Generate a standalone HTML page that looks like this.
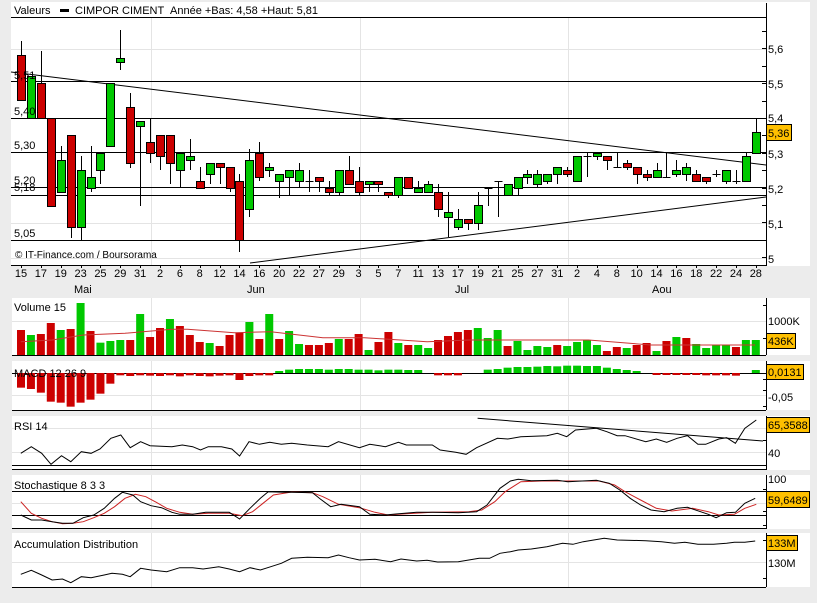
<!DOCTYPE html>
<html><head><meta charset="utf-8">
<style>
html,body{margin:0;padding:0;background:#ececec;width:817px;height:603px;overflow:hidden}
svg{display:block}
text{font-family:"Liberation Sans",sans-serif;font-size:11px;fill:#000}
</style></head><body>
<svg id="s" width="817" height="603" xmlns="http://www.w3.org/2000/svg">
<rect x="0" y="0" width="817" height="603" fill="#ececec"/>
<rect x="11" y="2" width="799" height="264" fill="#fff"/>
<rect x="12" y="298" width="798" height="57" fill="#fff"/>
<rect x="12" y="361" width="798" height="49" fill="#fff"/>
<rect x="12" y="416" width="798" height="54" fill="#fff"/>
<rect x="12" y="475" width="798" height="54" fill="#fff"/>
<rect x="12" y="533" width="798" height="54" fill="#fff"/>
<g id="grid" stroke="#e4e4e4" stroke-width="1"></g>
<g id="lines" stroke="#000" stroke-width="1" fill="none"></g>
<g id="cand"></g>
<g id="lower"></g>
<g>
<text x="14" y="14">Valeurs</text>
<rect x="60" y="9" width="9" height="3" fill="#000"/>
<text x="75" y="14">CIMPOR CIMENT</text>
<text x="170" y="14">Année +Bas: 4,58 +Haut: 5,81</text>
<text x="14" y="79">5,51</text>
<text x="14" y="115">5,40</text>
<text x="14" y="149">5,30</text>
<text x="14" y="184">5,20</text>
<text x="14" y="191">5,18</text>
<text x="14" y="237">5,05</text>
<text x="15" y="258" style="font-size:10px">© IT-Finance.com / Boursorama</text>
<text x="768" y="53">5,6</text>
<text x="768" y="88">5,5</text>
<text x="768" y="122">5,4</text>
<text x="768" y="158">5,3</text>
<text x="768" y="193">5,2</text>
<text x="768" y="228">5,1</text>
<text x="768" y="263">5</text>
<rect x="766.5" y="124.5" width="25" height="16" fill="#ffc000" stroke="#000"/>
<text x="768" y="137">5,36</text>
<text x="74" y="293">Mai</text>
<text x="247" y="293">Jun</text>
<text x="455" y="293">Jul</text>
<text x="652" y="293">Aou</text>
<text x="14" y="311">Volume 15</text>
<text x="768" y="325">1000K</text>
<rect x="766.5" y="333.5" width="29" height="15" fill="#ffc000" stroke="#000"/>
<text x="768" y="345">436K</text>
<text x="14" y="377">MACD 12 26 9</text>
<rect x="766.5" y="364.5" width="37" height="15" fill="#ffc000" stroke="#000"/>
<text x="768" y="376">0,0131</text>
<text x="768" y="401">-0,05</text>
<text x="14" y="430">RSI 14</text>
<rect x="766.5" y="417.5" width="43" height="15" fill="#ffc000" stroke="#000"/>
<text x="768" y="429">65,3588</text>
<text x="768" y="457">40</text>
<text x="14" y="489">Stochastique 8 3 3</text>
<text x="768" y="483">100</text>
<rect x="766.5" y="491.5" width="43" height="16" fill="#ffc000" stroke="#000"/>
<text x="768" y="504">59,6489</text>
<text x="14" y="548">Accumulation Distribution</text>
<rect x="766.5" y="535.5" width="31" height="15" fill="#ffc000" stroke="#000"/>
<text x="768" y="547">133M</text>
<text x="768" y="567">130M</text>
</g>
<g id="xl"></g>
</svg>
<script>
var NS="http://www.w3.org/2000/svg";
function el(p,t,a){var e=document.createElementNS(NS,t);for(var k in a)e.setAttribute(k,a[k]);document.getElementById(p).appendChild(e);return e;}
function ln(p,x1,y1,x2,y2,c,w){el(p,'line',{x1:x1,y1:y1,x2:x2,y2:y2,stroke:c||'#000','stroke-width':w||1});}
var R='#cc0000',G='#00c800';
// grid
[151.5,360.5,568.5].forEach(function(x){ln('grid',x,17,x,265,'#e4e4e4');[[298,355],[361,410],[416,470],[475,529],[533,587]].forEach(function(r){ln('grid',x,r[0],x,r[1],'#e4e4e4');});});
[49.5,223.5,258.5].forEach(function(y){ln('grid',11,y,766,y,'#e4e4e4');});
ln('grid',12,321.5,766,321.5,'#e4e4e4');ln('grid',12,395.5,766,395.5,'#e4e4e4');
ln('grid',12,428.5,766,428.5,'#e4e4e4');ln('grid',12,452.5,766,452.5,'#e4e4e4');
ln('grid',12,503.5,766,503.5,'#e4e4e4');ln('grid',12,562.5,766,562.5,'#e4e4e4');
// main lines
ln('lines',11,17.5,766,17.5);ln('lines',766.5,3,766.5,266);ln('lines',11,265.5,766,265.5);
[81.5,118.5,152.5,187.5,195.5,240.5].forEach(function(y){ln('lines',11,y,766,y);});
ln('lines',11,72,766,165);ln('lines',250,263,766,197);
for(var y=31;y<265;y+=17.4){ln('lines',762,Math.round(y)+.5,766,Math.round(y)+.5);}
// lower frames
[355.5,410.5,469.5,528.5,587.5].forEach(function(y){ln('lines',12,y,766,y);});
[[298,355],[361,410],[416,470],[475,529],[533,587]].forEach(function(r){ln('lines',766.5,r[0],766.5,r[1]);});
[305,338,379,390,406,440,465,489,511,525,540,578].forEach(function(y){ln('lines',763,y+.5,766,y+.5);});
ln('lines',12,373.5,766,373.5);ln('lines',12,465.5,766,465.5);ln('lines',12,491.5,766,491.5);ln('lines',12,515.5,766,515.5);
// x labels
var labs="15 17 19 23 25 29 31 2 6 8 12 14 16 20 22 27 29 3 5 7 11 13 17 19 21 25 27 31 2 4 8 10 14 16 18 22 24 28".split(' ');
function cx(i){return 21+i*9.93;}
labs.forEach(function(l,k){var x=cx(2*k);var t=el('xl','text',{x:x,y:277,'text-anchor':'middle'});t.textContent=l;ln('lines',Math.round(x)+.5,265,Math.round(x)+.5,268);});
// candles
var C=[['r',55,100,41,100],['g',76,118],['r',83,118,51,118],['r',118,206],['g',160,192,146,192],['r',135,227,135,238],['g',170,227,156,240],['g',177,188,146,192],['g',153,170,153,184],['g',83,146],['g',58,62,30,70],['r',107,163,93,168],['g',121,126,121,206],['r',142,153,118,163],['r',135,156,135,170],['r',135,163,135,184],['g',153,170,153,188],['g',156,160,139,170],['r',181,188,167,188],['g',163,174,163,184],['r',163,167,163,184],['r',167,188,167,192],['r',181,240,174,252],['g',160,209,149,217],['r',153,177,142,181],['g',167,170,163,177],['g',174,181,174,198],['g',170,177,170,195],['g',170,181,163,188],['d',181,181,170,192],['r',177,181,177,192],['r',188,192,181,195],['g',170,192,170,195],['r',170,184,156,184],['r',181,192,167,195],['g',181,184,181,192],['r',181,184,181,192],['r',192,195,192,198],['g',177,195,177,198],['r',177,188],['g',188,192,181,192],['g',184,192,181,192],['r',192,209,184,217],['g',212,217,192,237],['g',219,227,209,230],['r',219,223,219,230],['g',205,223,192,230],['d',188,188,188,206],['d',181,181,181,217],['g',184,195],['g',177,188,177,195],['g',174,177,170,184],['g',174,184,170,188],['g',174,181,174,184],['g',167,174,167,184],['r',170,174,167,177],['g',156,181],['d',156,156,153,177],['g',153,156,153,160],['r',156,160,156,170],['d',167,167,153,167],['r',163,167,160,170],['r',167,174,167,184],['r',174,177,170,181],['g',170,177,163,177],['d',177,177,153,177],['g',170,174,160,177],['g',167,174,163,181],['r',174,181,170,181],['r',177,181,177,184],['d',174,174,170,177],['g',170,181,170,184],['d',181,181,170,184],['g',156,181,153,181],['g',132,153,118,153]];
C.forEach(function(c,i){var x=Math.round(cx(i))+.5;var wt=c[3]||c[1],wb=c[4]||c[2];
ln('cand',x,wt,x,wb);
if(c[0]=='d'){ln('cand',x-4,c[1]+.5,x+4,c[1]+.5);}
else el('cand','rect',{x:x-4,y:c[1]+.5,width:8,height:Math.max(c[2]-c[1],2),fill:c[0]=='r'?R:G,stroke:'#000'});});
// volume
var VT=[105,120,117,84,105,102,24,108,143,138,135,135,57,126,99,72,93,120,141,144,153,120,114,81,132,57,132,108,147,150,150,144,132,132,117,165,141,111,144,150,150,159,135,123,111,105,99,129,105,153,138,165,153,156,150,153,141,135,150,168,156,159,150,144,168,138,126,129,147,159,150,150,156,135,135];
var VC="rgrrgrgrgggrgrrgrrrgrrrgrgrggrrrgrrgrrgrggrrrrgggrggggrggggrrgrrgrgrggggrgg";
VT.forEach(function(t,i){var y=295+t/3;el('lower','rect',{x:cx(i)-4,y:y,width:8,height:355-y,fill:VC[i]=='g'?G:R});});
function pl(pts,col){var d=pts.map(function(p){return (p[0]/1.92).toFixed(1)+','+(295+p[1]/3).toFixed(1);}).join(' ');el('lower','polyline',{points:d,fill:'none',stroke:col,'stroke-width':1});}
pl([[40,140],[100,135],[160,120],[240,115],[330,103],[360,103],[450,113],[520,110],[620,128],[700,128],[820,140],[900,135],[1130,135],[1250,150],[1450,150]],'#cc3333');
// macd
var MH=[278,282,293,320,323,335,323,314,296,266,241,243,241,242,243,241,244,241,243,244,242,241,255,243,241,241,228,224,222,222,222,224,222,222,224,224,226,224,224,225,225,232,241,241,241,235,235,224,222,218,216,216,215,213,214,212,212,213,213,218,222,225,228,235,240,240,240,240,240,241,241,241,242,235,225];
MH.forEach(function(t,i){var y0=373,y=295+t/3;var top=Math.min(y,y0),h=Math.abs(y-y0);if(h<1)return;el('lower','rect',{x:cx(i)-4,y:top,width:8,height:h,fill:y>y0?R:G});});
// rsi
pl([[40,475],[60,455],[80,475],[98,508],[118,482],[136,500],[156,470],[175,475],[192,462],[213,430],[232,420],[250,458],[270,440],[288,452],[330,455],[350,450],[370,455],[385,465],[400,455],[425,455],[445,462],[460,483],[478,440],[498,448],[518,442],[540,448],[560,445],[590,450],[630,455],[650,440],[690,458],[710,448],[740,455],[765,442],[780,450],[830,450],[845,465],[875,472],[895,478],[915,458],[955,430],[975,432],[1000,425],[1050,422],[1070,415],[1088,425],[1105,405],[1145,400],[1165,410],[1185,422],[1200,422],[1240,440],[1260,432],[1280,442],[1300,430],[1320,422],[1340,448],[1355,448],[1380,432],[1395,428],[1412,445],[1430,400],[1452,375]],'#000');
pl([[917,370],[1465,438]],'#000');
// stoch
pl([[40,620],[60,655],[80,670],[100,680],[120,686],[140,685],[160,680],[180,668],[200,655],[220,635],[240,610],[260,598],[280,605],[300,622],[320,640],[345,652],[370,658],[400,655],[440,655],[465,662],[485,650],[505,625],[525,600],[560,591],[600,593],[620,605],[650,628],[690,638],[720,652],[745,660],[780,656],[830,652],[900,650],[925,645],[950,620],[970,590],[1000,560],[1040,558],[1100,558],[1150,558],[1180,570],[1200,590],[1230,615],[1260,640],[1290,648],[1330,640],[1360,650],[1380,660],[1410,658],[1430,640],[1452,628]],'#cc2222');
pl([[40,660],[60,675],[80,675],[100,680],[120,685],[140,685],[160,668],[180,660],[200,640],[220,610],[235,592],[255,600],[270,620],[290,632],[310,638],[330,652],[345,658],[370,658],[395,652],[440,652],[460,672],[480,640],[500,610],[515,590],[545,592],[560,592],[600,593],[615,612],[635,635],[655,628],[690,635],[710,658],[740,660],[760,657],[800,652],[830,652],[880,653],[915,650],[935,630],[960,580],[980,558],[995,553],[1020,557],[1070,556],[1090,560],[1145,556],[1170,565],[1190,585],[1210,610],[1230,630],[1250,645],[1275,650],[1300,640],[1320,637],[1345,650],[1360,658],[1375,668],[1395,653],[1412,652],[1430,625],[1450,610]],'#000');
// accum
pl([[40,838],[60,826],[80,840],[100,855],[120,852],[136,863],[156,845],[175,848],[200,840],[215,835],[235,838],[250,845],[270,820],[290,825],[320,830],[345,818],[370,818],[390,822],[420,815],[440,822],[460,830],[480,818],[500,825],[520,815],[540,805],[560,790],[590,787],[630,788],[650,780],[670,788],[690,795],[720,793],[750,800],[770,792],[800,798],[820,796],[840,801],[880,800],[900,795],[920,790],[940,790],[960,775],[980,770],[995,765],[1020,762],[1050,755],[1080,745],[1100,748],[1120,740],[1160,730],[1185,735],[1240,737],[1270,740],[1295,745],[1315,742],[1340,748],[1370,748],[1395,745],[1410,742],[1430,742],[1450,738]],'#000');
</script>
</body></html>
